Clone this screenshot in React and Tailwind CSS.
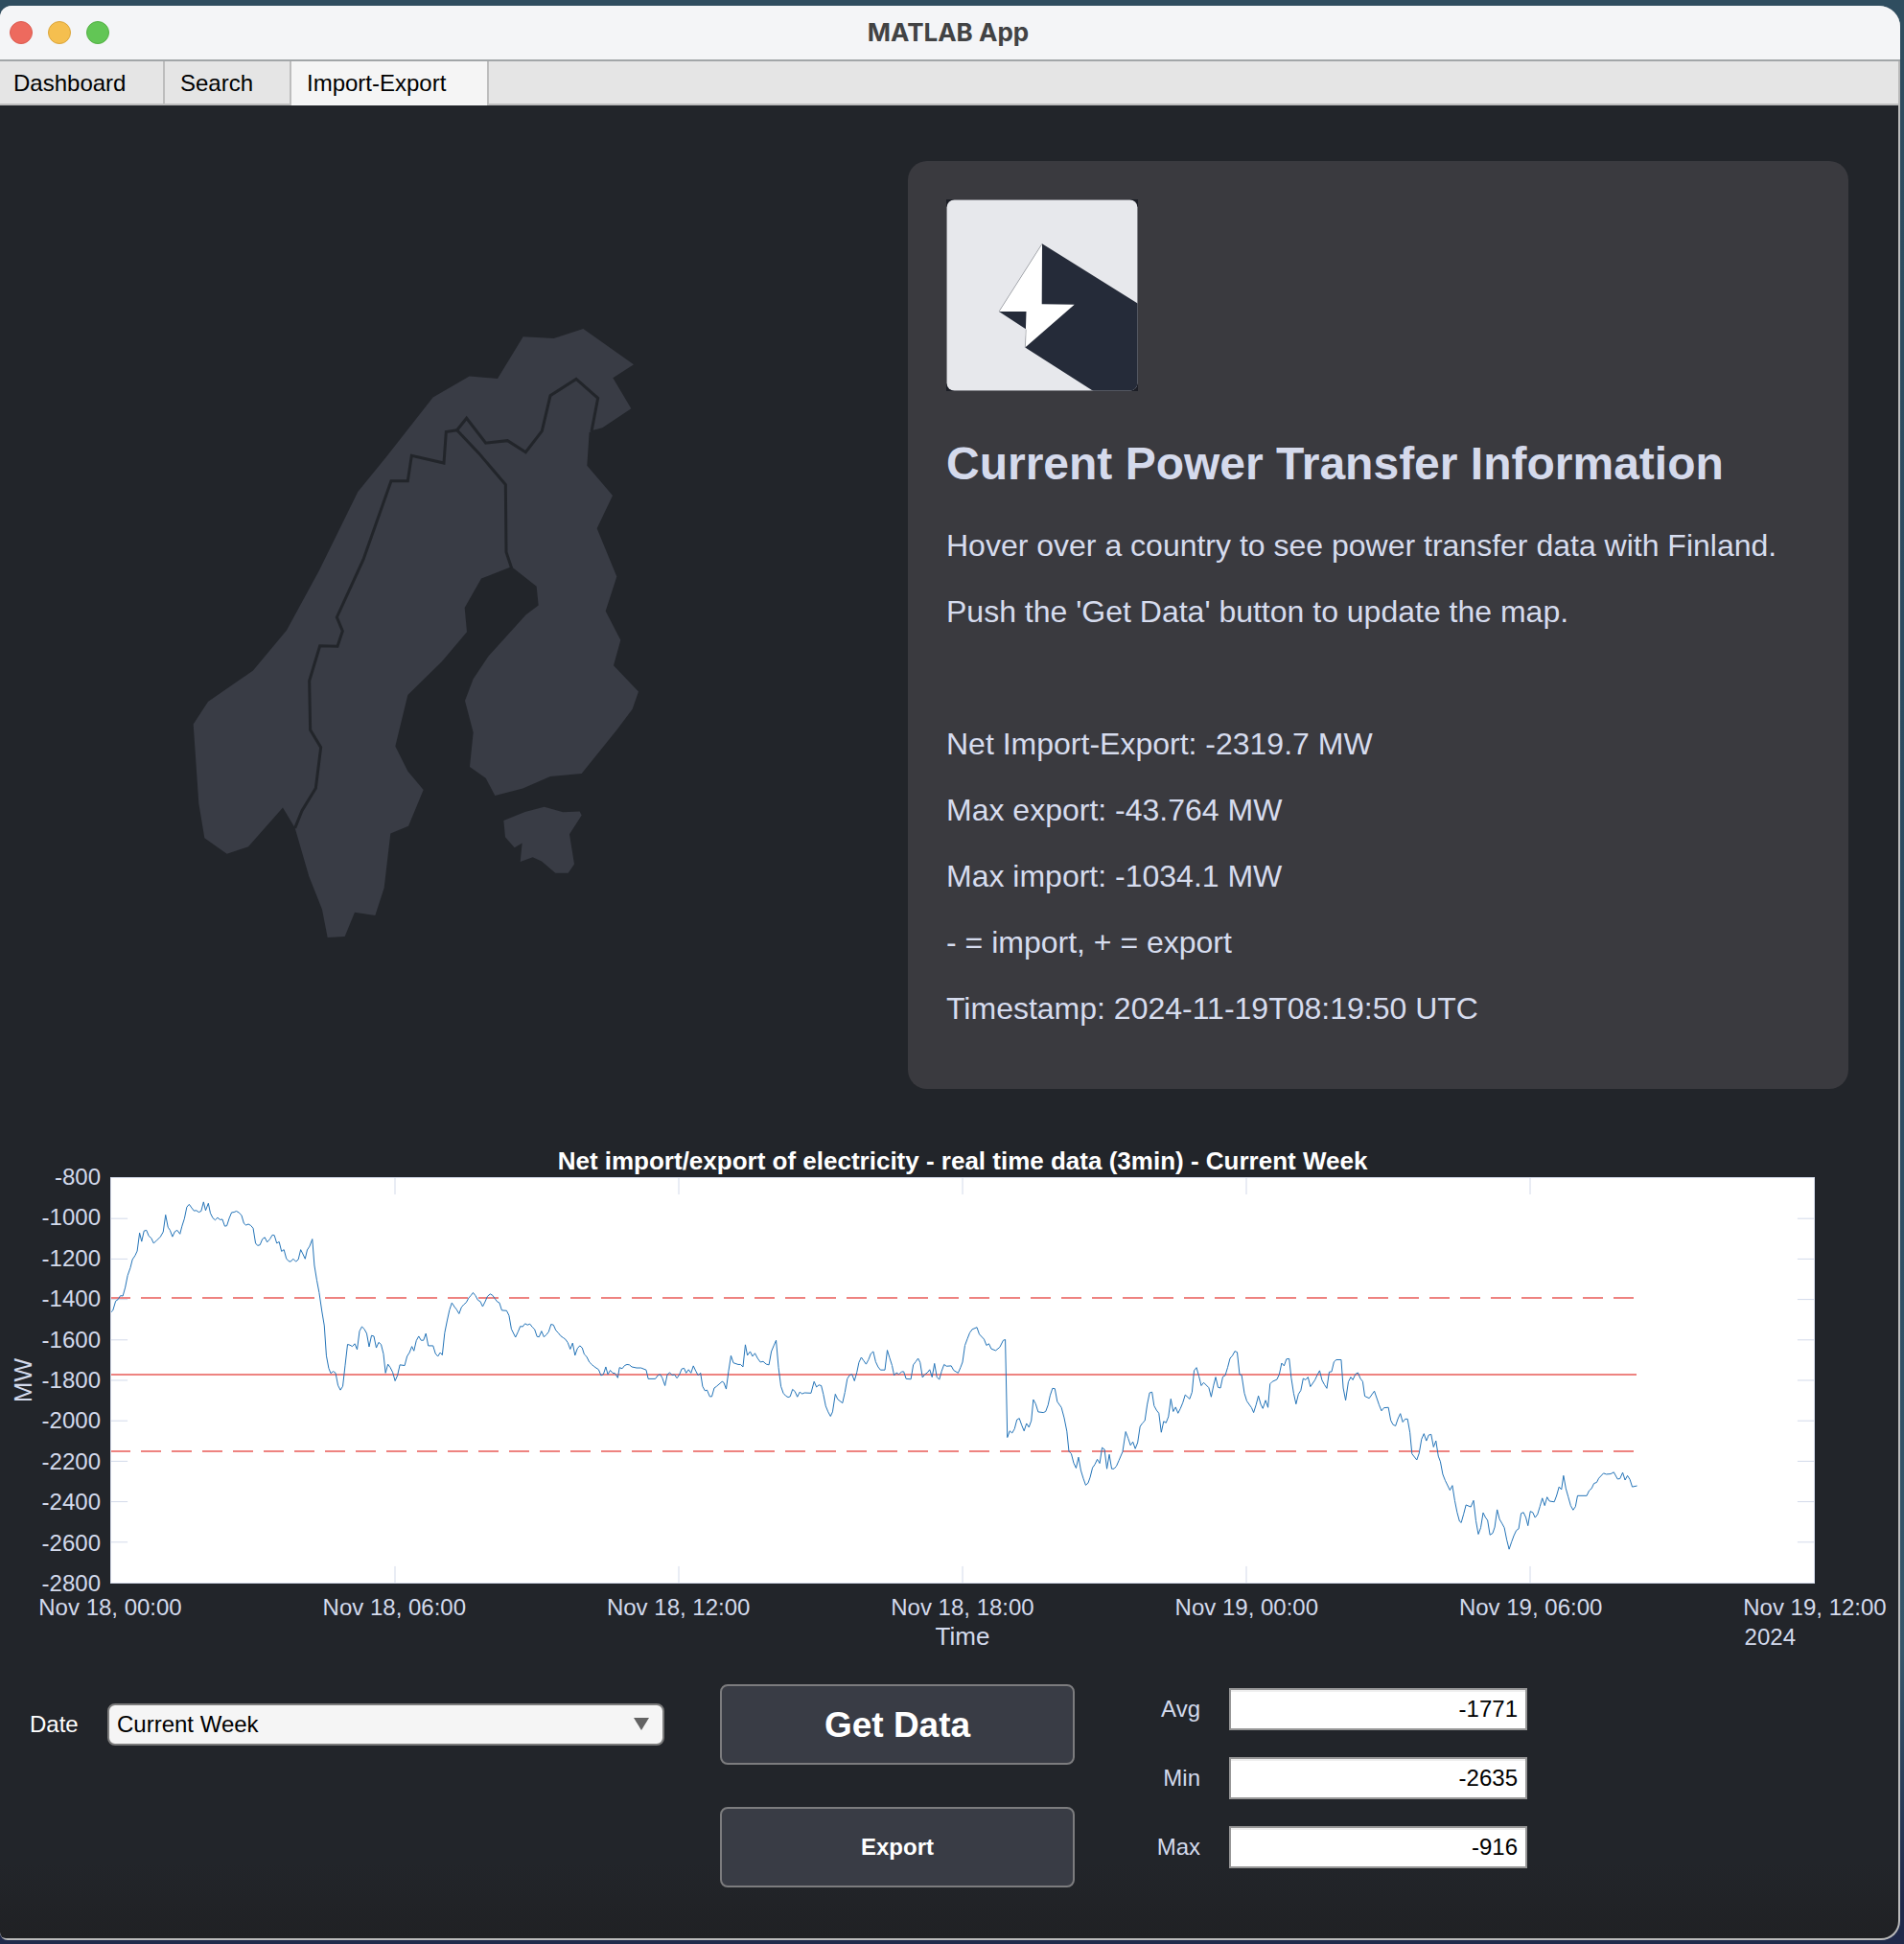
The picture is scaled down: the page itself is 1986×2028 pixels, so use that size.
import React from "react";

const NORWAY_SWEDEN_BORDER =
  "383,1254 405,1212 448,1158 464,1060 431,1018 428,900 461,816 516,817 532,780 514,747 597,608 684,419 736,419 748,358 849,376 856,301 890,297";
const NORWAY_FINLAND_BORDER =
  "890,297 920,268 980,328 1048,322 1105,350 1156,299 1182,214 1263,174 1331,220 1311,300";
const SWEDEN_FINLAND_BORDER = "890,297 958,352 1042,428 1044,590 1061,629";

const NORWAY =
  "1316,297 1345,291 1435,245 1378,171 1443,139 1285,53 1193,76 1097,72 1017,173 929,167 815,218 668,362 580,445 459,634 357,778 252,875 111,950 65,1004 82,1195 100,1278 170,1316 237,1299 345,1205 380,1250 " +
  NORWAY_SWEDEN_BORDER +
  " " +
  NORWAY_FINLAND_BORDER;
const SWEDEN =
  NORWAY_SWEDEN_BORDER +
  " 958,352 1042,428 1044,590 1058,626 966,654 914,724 921,782 843,853 736,934 697,1057 736,1117 785,1162 738,1249 682,1267 662,1398 634,1464 570,1457 539,1515 485,1517 468,1450 427,1370 385,1259";
const FINLAND =
  NORWAY_FINLAND_BORDER +
  " 1304,302 1297,382 1377,454 1328,533 1390,649 1355,732 1402,802 1380,863 1458,926 1439,968 1390,1018 1280,1123 1182,1130 1096,1159 1009,1176 980,1134 930,1107 941,1024 915,948 941,895 988,841 1106,741 1145,718 1139,673 1062,626 1044,590 1042,428 958,352";
const ESTONIA =
  "1036,1236 1103,1215 1163,1203 1222,1216 1274,1214 1280,1223 1242,1269 1257,1341 1238,1362 1198,1362 1155,1334 1127,1324 1088,1335 1094,1290 1070,1301 1041,1276";

function CountryMap() {
  return (
    <svg viewBox="0 0 520 680" className="block w-[520px] max-w-full" role="img" aria-label="Nordic map">
      <g transform="scale(0.33333 0.43367)">
        <g fill="#393c45">
          <polygon points={NORWAY} />
          <polygon points={SWEDEN} />
          <polygon points={FINLAND} />
          <polygon points={ESTONIA} />
        </g>
        <g fill="none" stroke="#22252a" strokeWidth="3" strokeLinejoin="miter">
          <polyline vectorEffect="non-scaling-stroke" points={NORWAY_SWEDEN_BORDER} />
          <polyline vectorEffect="non-scaling-stroke" points={NORWAY_FINLAND_BORDER} />
          <polyline vectorEffect="non-scaling-stroke" points={SWEDEN_FINLAND_BORDER} />
        </g>
      </g>
    </svg>
  );
}

function Logo() {
  return (
    <svg viewBox="0 0 200 200" className="block size-[200px]" role="img" aria-label="Logo">
      <rect width="200" height="200" fill="#1c1e26" />
      <clipPath id="logo-clip">
        <rect x="0.5" y="0.5" width="199" height="199" rx="8" />
      </clipPath>
      <g clipPath="url(#logo-clip)">
        <rect width="200" height="200" fill="#e7e8ec" />
        <path d="M100 46.300 200 108.700V200H153.500L82.300 154.500 83.300 135.500 55 117Z" fill="#252b39" />
        <path d="M100 46.300 99.700 109.300 133.700 109.700 82.300 154.500 83.500 117H55Z" fill="#fff" />
        <path d="M100 46.300 55 117M83.300 135.500 82.300 154.500" stroke="#9a9ca2" strokeWidth="0.7" fill="none" />
      </g>
    </svg>
  );
}

/* Net transfer series as [x offset, points] chunks in plot units. */
const SERIES = [
  [
    0,
    "322,527 327,522 335,495 342,490 349,479 356,480 363,455 370,420 378,397 384,373 392,361 398,348 405,295 411,320 418,289 425,287 432,304 439,310 446,325 453,319 466,306 474,292 481,242 488,278 494,287 501,306 508,291 515,287 523,298 529,275 536,253 543,219 550,211 557,221 564,230 571,229 578,234 585,231 592,204 598,229 606,208 612,237 619,251 626,257 633,250 640,256 647,255 654,275 660,274 667,252 674,235 681,234 688,231 695,235 703,243 710,267 716,272 723,269 730,273 737,281 744,325 750,332 757,330 764,313 771,308 778,322 786,313 793,301 799,302 806,325 813,321 820,349 827,344 834,370 841,378 847,379 854,371 862,379 869,373 876,344 882,356 889,371 895,345 902,334 910,313 916,390 923,433 930,470 938,525 945,567 951,655 958,692 964,707 971,701 978,706 985,742 992,756 999,745 1006,683 1013,622 1020,624 1027,628 1034,620 1041,637 1048,583 1055,570 1062,577 1069,590 1076,629 1083,596 1090,598 1097,632 1104,616 1111,622 1118,650 1124,706 1131,680 1138,690 1145,704 1152,729 1159,713 1166,682 1180,684 1187,657 1194,646 1201,628 1207,641 1214,611 1221,598 1228,610 1235,610 1242,590 1249,626 1263,626 1270,649 1277,657 1284,646 1290,653 1297,588 1304,553 1311,521 1318,500 1325,511 1332,520 1339,532 1346,513 1353,505 1360,499 1367,486 1374,478 1380,470 1387,479 1394,492 1401,496 1408,511 1415,497 1422,481 1430,474 1437,478 1444,488 1451,497 1457,500 1464,522 1478,523",
  ],
  [
    1400,
    "85,537 92,577 104,601 111,586 118,569 125,570 132,561 139,565 146,562 153,571 160,578 167,599 173,600 180,583 187,600 194,594 201,585 208,563 215,565 222,581 229,588 236,597 243,602 250,607 257,617 264,636 271,618 278,654 285,634 292,626 299,632 305,651 312,658 320,674 327,681 334,687 347,696 354,713 361,710 368,688 374,710 381,698 388,706 395,707 403,720 408,690 416,693 423,684 430,681 437,682 444,688 458,691 471,691 486,697 492,723 513,723 520,713 527,710 533,720 541,743 548,710 555,705 562,712 569,711 576,721 583,711 590,694 597,692 603,706 610,696 617,706 624,685 631,700 638,713 645,706 651,745 658,758 664,756 672,775 678,775 685,750 692,745 708,731 713,734 720,753 727,700 734,655 741,676 755,681 762,681 769,688 776,623 782,654 790,643 797,657 804,648 812,663 820,674 828,672 837,680 845,682 852,643 859,626 866,610 873,690 880,745 887,765 894,773 901,777 907,775 914,754 921,760 928,776 935,762 942,767 949,764 968,765 977,731 984,747 991,741 998,743 1004,768 1011,803 1018,820 1025,833 1031,820 1039,768 1046,783 1060,794 1067,763 1074,723 1081,712 1088,710 1095,729 1102,704 1108,675 1115,660 1122,670 1129,680 1136,667 1143,649 1150,643 1157,673 1164,688 1171,697 1184,697 1191,639 1198,662 1205,684 1211,713 1218,705 1225,710 1233,702 1239,702 1246,723 1260,724 1267,682 1274,673 1281,663 1287,675 1294,719 1301,710 1308,705 1315,696 1322,718 1329,678 1336,718 1343,725 1350,700 1357,681 1364,686 1378,685 1385,698 1398,706 1405,690 1411,674 1418,625 1425,606 1432,588 1439,578 1453,572 1460,592 1474,607 1481,625 1488,620 1495,635 1508,640 1520,630 1530,610",
  ],
  [
    2800,
    "136,608 142,895 149,876 156,882 163,870 170,843 177,839 184,859 191,876 198,854 205,865 212,846 218,784 225,797 232,820 247,822 254,819 261,800 267,772 274,751 281,752 288,790 300,807 308,837 316,877 322,936 329,943 336,970 343,985 350,953 357,992 364,1015 371,1035 378,1029 384,1012 391,984 398,974 405,959 412,971 419,925 426,930 433,987 440,945 447,987 454,987 461,979 468,963 479,937 488,878 495,897 502,918 509,908 516,928 523,910 530,863 537,853 544,846 551,798 558,764 565,762 571,802 578,815 585,824 592,880 599,848 606,852 613,834 620,782 627,819 634,806 641,824 648,810 655,793 662,770 675,782 682,762 688,699 695,690 702,715 709,743 716,734 731,749 738,776 745,742 751,718 758,748 765,750 772,717 779,713 786,690 793,663 800,655 807,642 814,645 821,710 827,712 835,765 842,788 849,798 856,808 862,822 869,800 876,773 883,798 889,810 897,786 904,807 910,738 917,731 930,725 937,710 944,677 951,685 958,665 966,664 972,720 979,765 986,797 993,768 1000,757 1007,722 1014,726 1021,718 1028,746 1041,727 1048,712 1055,699 1062,727 1069,740 1076,751 1083,703 1090,702 1097,673 1104,667 1118,667 1124,750 1131,786 1139,732 1146,718 1152,726 1160,709 1167,705 1174,722 1181,731 1187,774 1200,780 1215,759 1229,800 1236,817 1243,808 1256,807 1263,845 1270,858 1277,861 1284,840 1291,825 1298,850 1305,841 1312,841 1319,880 1325,943 1339,961 1346,941 1353,900 1360,884 1367,905 1374,888 1381,886 1388,923 1395,905 1402,950 1408,966 1415,1003 1422,1021 1436,1050 1443,1036 1450,1080 1457,1115 1464,1141 1469,1145 1476,1120 1483,1093 1497,1099 1505,1080 1512,1140 1519,1179 1526,1160 1533,1116 1540,1130 1546,1138",
  ],
  [
    3993,
    "360,1181 368,1176 374,1158 381,1107 388,1135 395,1147 402,1160 409,1195 416,1223 423,1202 430,1183 437,1168 444,1163 451,1118 458,1115 465,1130 471,1154 478,1112 485,1115 492,1130 499,1121 506,1098 513,1073 520,1095 527,1070 534,1082 548,1084 555,1065 562,1040 569,1048 575,1007 582,1045 589,1070 596,1095 603,1108 610,1098 616,1066 643,1066 650,1051 657,1045 664,1030 672,1027 678,1015 692,1000 700,1003 713,1002 722,997 733,1017 740,1016 748,998 755,1020 762,1007 769,1018 776,1040 790,1037",
  ],
];

const seriesPoints = SERIES.map(([offset, pts]) =>
  pts
    .split(" ")
    .map((p) => {
      const [x, y] = p.split(",").map(Number);
      return `${x + offset},${y}`;
    })
    .join(" ")
).join(" ");

const Y_LABELS = ["-800", "-1000", "-1200", "-1400", "-1600", "-1800", "-2000", "-2200", "-2400", "-2600", "-2800"];
const X_LABELS = [
  "Nov 18, 00:00",
  "Nov 18, 06:00",
  "Nov 18, 12:00",
  "Nov 18, 18:00",
  "Nov 19, 00:00",
  "Nov 19, 06:00",
  "Nov 19, 12:00",
];

const LEFT = 322;
const RIGHT = 5300;
const TOP = 134;
const BOTTOM = 1321;

function Plot() {
  const ticks = [];
  for (let i = 1; i < 10; i++) {
    const y = TOP + ((BOTTOM - TOP) * i) / 10;
    ticks.push(`M${LEFT} ${y}h48M${RIGHT} ${y}h-48`);
  }
  for (let i = 1; i < 6; i++) {
    const x = LEFT + ((RIGHT - LEFT) * i) / 6;
    ticks.push(`M${x} ${TOP}v48M${x} ${BOTTOM}v-48`);
  }
  return (
    <svg
      viewBox="322 134 4978 1187"
      preserveAspectRatio="none"
      className="block h-[424px] w-full border border-[#d5dbea] bg-white"
      role="img"
      aria-label="Net import/export in MW over time"
    >
      <path
        d={ticks.join("")}
        stroke="#d3daea"
        strokeWidth="1"
        shapeRendering="crispEdges"
        vectorEffect="non-scaling-stroke"
      />
      <g stroke="#ee8380" strokeWidth="2" fill="none" shapeRendering="crispEdges">
        <path d="M322 487H4782" strokeDasharray="21 11" strokeDashoffset="1" vectorEffect="non-scaling-stroke" />
        <path d="M322 711H4782" vectorEffect="non-scaling-stroke" />
        <path d="M322 935H4782" strokeDasharray="21 11" strokeDashoffset="1" vectorEffect="non-scaling-stroke" />
      </g>
      <polyline
        points={seriesPoints}
        fill="none"
        stroke="#2474b8"
        strokeWidth="1"
        strokeLinejoin="round"
        vectorEffect="non-scaling-stroke"
      />
    </svg>
  );
}

function Chart() {
  return (
    <section className="mt-[45px] pr-[87px] text-2xl text-[#d3daec]">
      <h2 className="ml-[115px] h-[47px] text-center text-[26px] leading-[60px] font-bold text-white">
        Net import/export of electricity - real time data (3min) - Current Week
      </h2>
      <div className="flex items-start">
        <div className="flex h-[424px] w-[115px] shrink-0 justify-between pr-[10px] pl-[9px]">
          <div className="flex items-center">
            <span className="rotate-180 text-[26px] leading-[30px] [writing-mode:vertical-rl]">MW</span>
          </div>
          <div className="flex flex-col justify-between">
            {Y_LABELS.map((l) => (
              <span key={l} className="flex h-0 items-center justify-end">
                {l}
              </span>
            ))}
          </div>
        </div>
        <div className="min-w-0 flex-1">
          <Plot />
          <div className="flex justify-between pt-[10px] leading-[30px]">
            {X_LABELS.map((l) => (
              <span key={l} className="flex w-0 justify-center whitespace-nowrap">
                {l}
              </span>
            ))}
          </div>
          <div className="grid grid-cols-3 leading-[31px]">
            <span className="col-start-2 text-center text-[26px]">Time</span>
            <span className="mr-[20px] text-right">2024</span>
          </div>
        </div>
      </div>
    </section>
  );
}

function Field({ id, label, value }) {
  return (
    <div className="flex items-center">
      <label htmlFor={id} className="w-[130px] pr-[30px] text-right text-[#d3daec]">
        {label}
      </label>
      <input
        id={id}
        readOnly
        defaultValue={value}
        className="h-[44px] w-[311px] border-2 border-[#979797] bg-white pr-2 text-right text-black shadow-[inset_0_2px_0_#eeeeee]"
      />
    </div>
  );
}

function Controls() {
  const button = "h-[84px] w-full rounded-lg border-2 border-[#7c7c7e] bg-[#393c45] font-bold text-white";
  return (
    <section className="flex items-start pt-[34px] pl-[31px] text-2xl">
      <div className="mt-[20px] flex items-center">
        <label htmlFor="date" className="w-[81px] text-white">
          Date
        </label>
        <div className="relative">
          <select
            id="date"
            defaultValue="Current Week"
            className="h-[44px] w-[581px] appearance-none rounded-lg border-2 border-[#7b7b7b] bg-[#f5f5f5] pl-2 text-black"
          >
            <option>Current Week</option>
          </select>
          <svg viewBox="0 0 16 13" className="pointer-events-none absolute top-[15px] right-4 h-[13px] w-4">
            <path d="M0 0h16L8 13z" fill="#636363" />
          </svg>
        </div>
      </div>
      <div className="ml-[58px] flex w-[370px] flex-col gap-[44px]">
        <button type="button" className={`${button} pt-[2px] text-[37px]`}>
          Get Data
        </button>
        <button type="button" className={button}>
          Export
        </button>
      </div>
      <div className="mt-[4px] ml-[31px] flex flex-col gap-[28px]">
        <Field id="avg" label="Avg" value="-1771" />
        <Field id="min" label="Min" value="-2635" />
        <Field id="max" label="Max" value="-916" />
      </div>
    </section>
  );
}

function InfoPanel() {
  return (
    <article className="rounded-[20px] bg-[#3a3a3f] p-10 pb-[65px] text-[32px] leading-[37px] text-[#d6dcee]">
      <Logo />
      <h1 className="mt-[49px] mb-10 text-5xl leading-[54px] font-bold text-[#d5daec]">
        Current Power Transfer Information
      </h1>
      <div className="flex flex-col gap-8">
        <p>Hover over a country to see power transfer data with Finland.</p>
        <p>Push the 'Get Data' button to update the map.</p>
        <p className="mt-[69px]">Net Import-Export: -2319.7 MW</p>
        <p>Max export: -43.764 MW</p>
        <p>Max import: -1034.1 MW</p>
        <p>- = import, + = export</p>
        <p>Timestamp: 2024-11-19T08:19:50 UTC</p>
      </div>
    </article>
  );
}

function TitleBar() {
  return (
    <header className="grid h-[58px] grid-cols-[1fr_auto_1fr] items-center border-b-2 border-[#a2a6a8] bg-[#f4f5f7]">
      <div className="flex gap-4 pl-[10px]">
        <button type="button" aria-label="Close" className="size-6 rounded-full border border-[#dc5b50] bg-[#ed6a5e]" />
        <button type="button" aria-label="Minimise" className="size-6 rounded-full border border-[#dba63c] bg-[#f5bf4f]" />
        <button type="button" aria-label="Zoom" className="size-6 rounded-full border border-[#52b043] bg-[#62c655]" />
      </div>
      <span className="pr-1 pb-[2px] font-[Inter,sans-serif] text-[26px] font-bold text-[#424344]">MATLAB App</span>
    </header>
  );
}

function Tabs() {
  return (
    <nav role="tablist" className="flex h-[46px] bg-[#e5e5e5] text-2xl text-black">
      <button
        type="button"
        role="tab"
        aria-selected="false"
        className="w-[172px] border-r-2 border-b-2 border-[#bdbdbd] pt-[2px] pl-[14px] text-left"
      >
        Dashboard
      </button>
      <button
        type="button"
        role="tab"
        aria-selected="false"
        className="w-[132px] border-r-2 border-b-2 border-[#bdbdbd] pt-[2px] pl-4 text-left"
      >
        Search
      </button>
      <button
        type="button"
        role="tab"
        aria-selected="true"
        className="w-[206px] border-r-2 border-[#bdbdbd] bg-[#f5f5f5] pl-4 text-left"
      >
        Import-Export
      </button>
      <div className="flex-1 border-b-2 border-[#bdbdbd]" />
    </nav>
  );
}

export default function App() {
  return (
    <div className="flex min-h-screen flex-col bg-[linear-gradient(180deg,#2f4d5f_0%,#2c4a60_50%,#36566a_85%,#20294a_98%)] pt-[6px] pr-[4px] pb-[4px] font-['Liberation_Sans',Arial,sans-serif]">
      <div className="flex flex-1 flex-col overflow-hidden rounded-tl-[12px] rounded-tr-[22px] rounded-br-[20px] rounded-bl-[8px] bg-[#bababa]">
        <TitleBar />
        <div className="mr-[2px] mb-[2px] flex flex-1 flex-col overflow-hidden rounded-br-[18px] rounded-bl-[6px] bg-[linear-gradient(180deg,#22252a_0%,#22252a_96%,#202124_100%)]">
          <Tabs />
          <main>
            <div className="grid grid-cols-[947fr_981fr] pt-[58px] pr-[52px]">
              <div className="pt-[152px] pl-[180px]">
                <CountryMap />
              </div>
              <InfoPanel />
            </div>
            <Chart />
            <Controls />
          </main>
        </div>
      </div>
    </div>
  );
}
